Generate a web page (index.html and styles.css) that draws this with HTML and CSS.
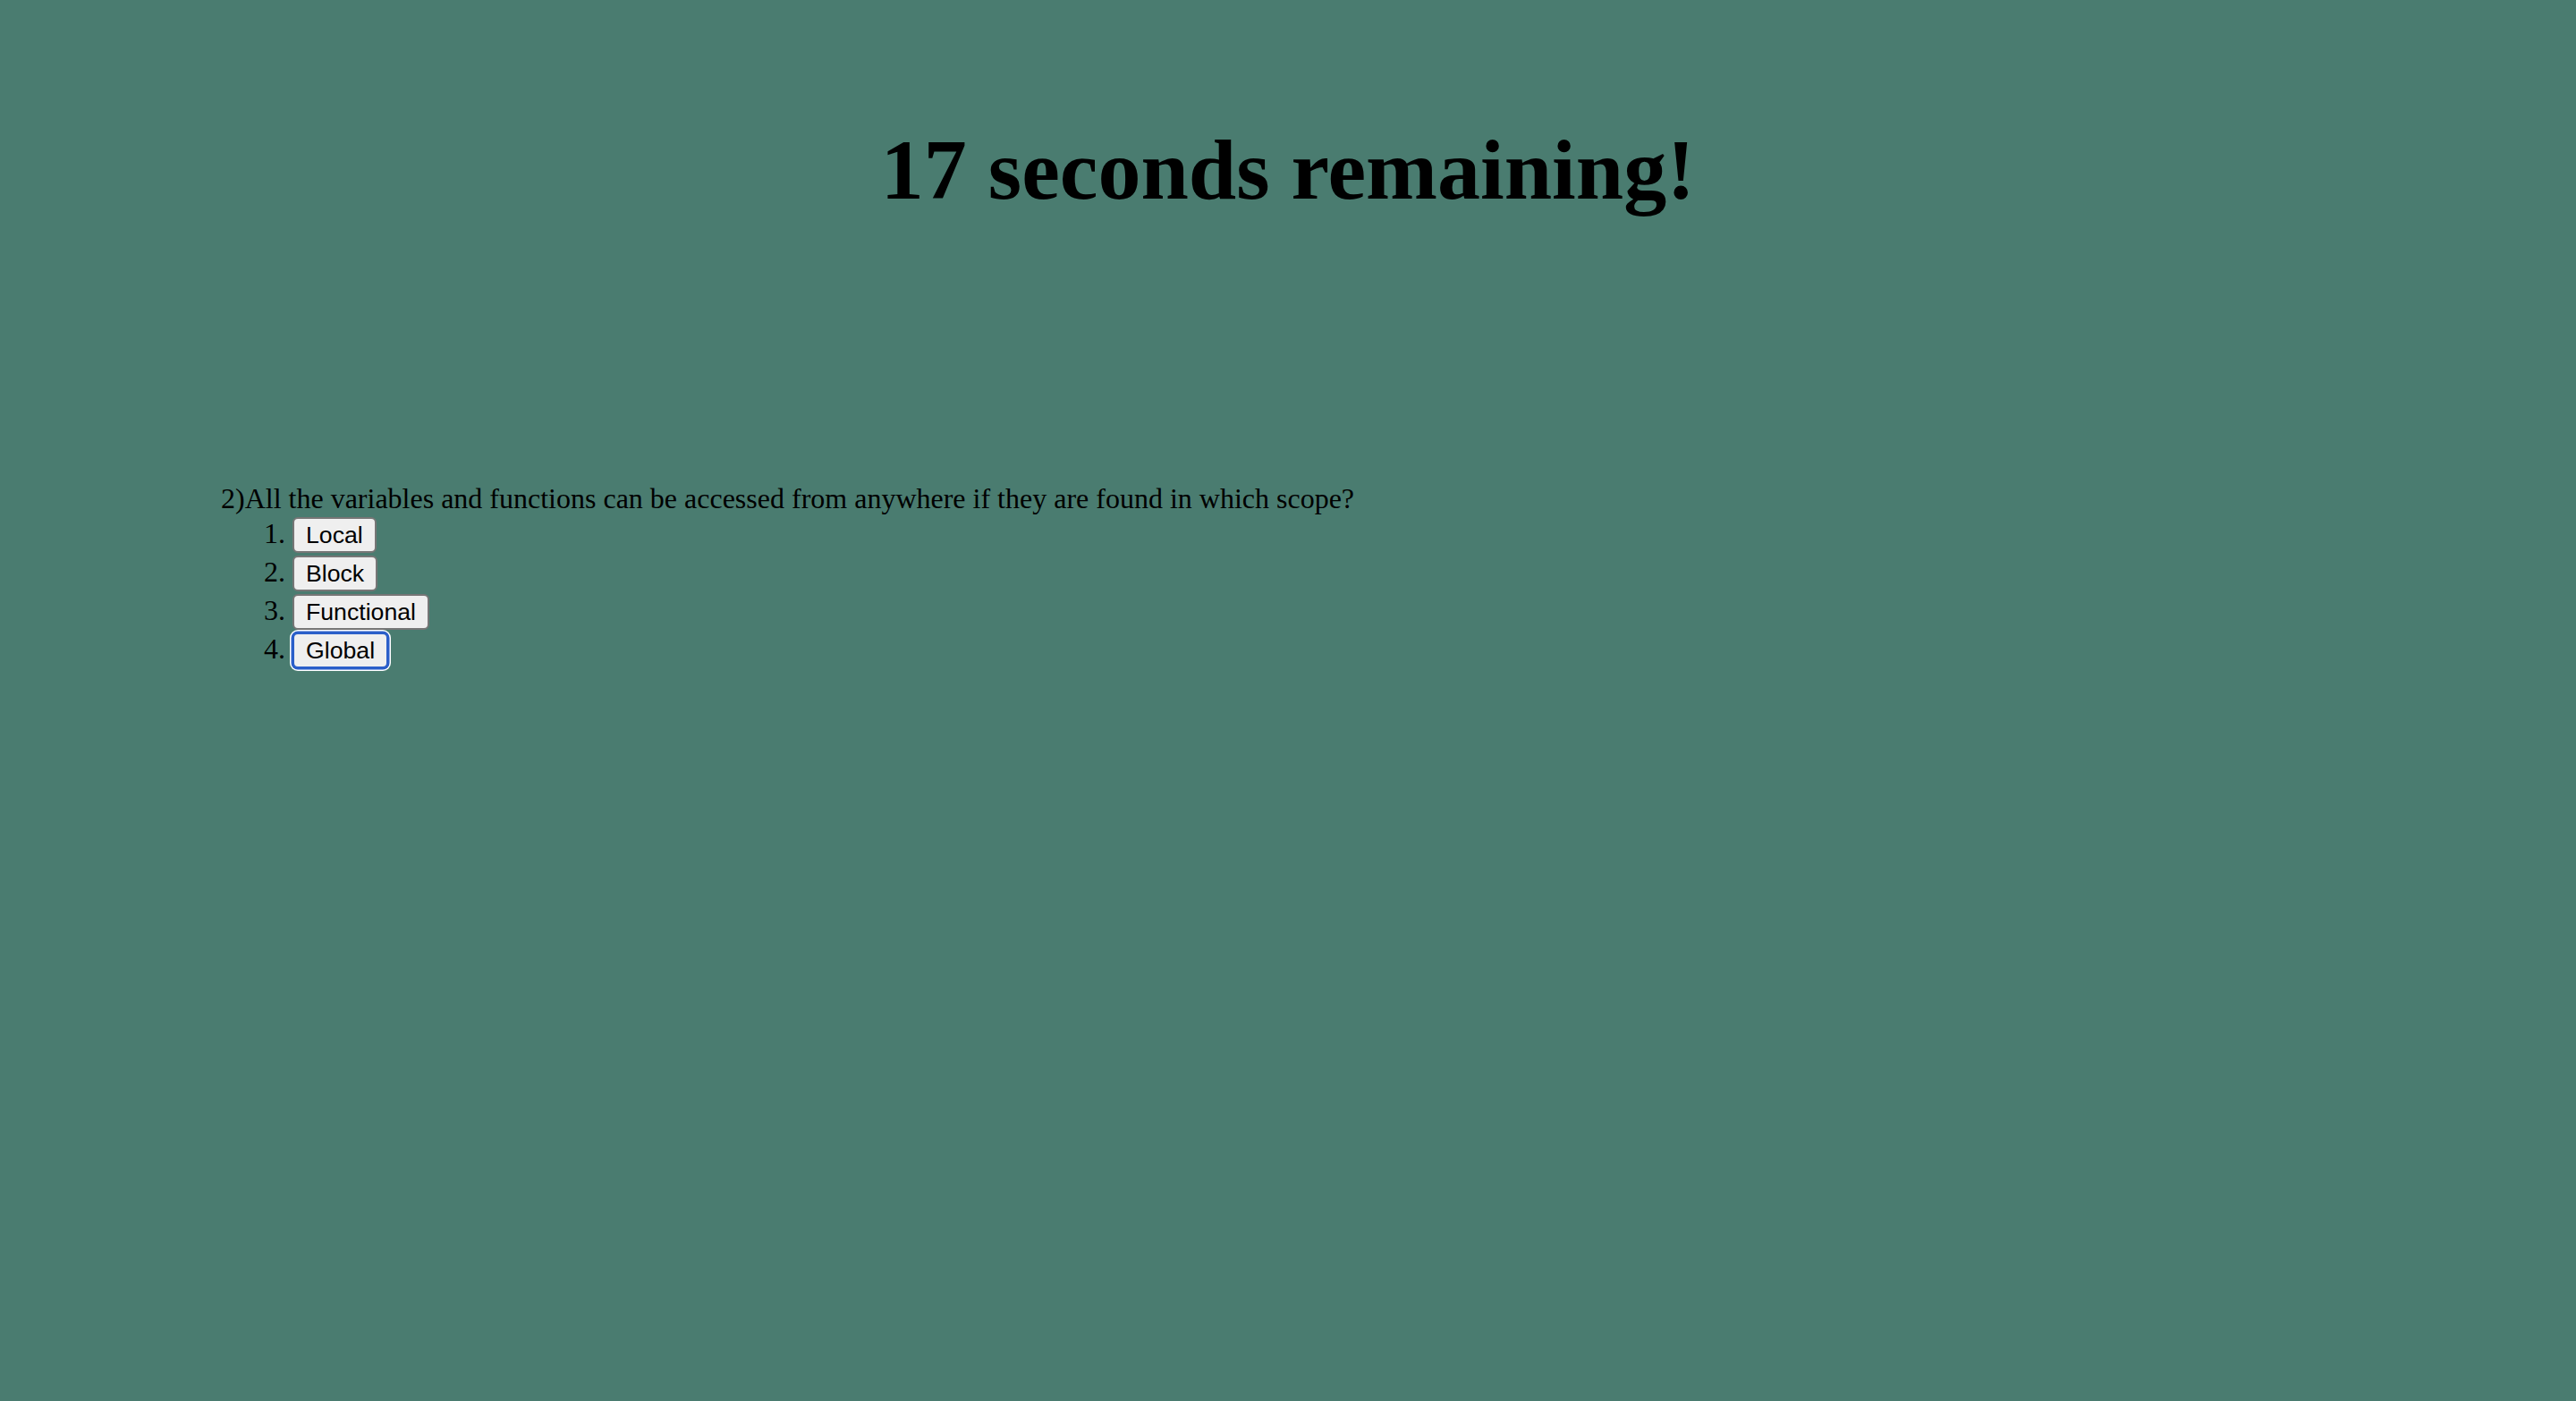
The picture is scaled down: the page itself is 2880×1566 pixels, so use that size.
FILE: index.html
```html
<!DOCTYPE html>
<html>
<head>
<meta charset="utf-8">
<title>Quiz</title>
<link rel="stylesheet" href="styles.css">
</head>
<body>
<header class="timer">
  <h1 class="timer-title">17 seconds remaining!</h1>
</header>
<main class="quiz">
  <div class="question">2)All the variables and functions can be accessed from anywhere if they are found in which scope?</div>
  <ol class="answers">
    <li><button class="answer">Local</button></li>
    <li><button class="answer">Block</button></li>
    <li><button class="answer">Functional</button></li>
    <li><button class="answer answer-focused">Global</button></li>
  </ol>
</main>
</body>
</html>
```
FILE: styles.css
```css
html, body {
  margin: 0;
  padding: 0;
}
body {
  background: rgb(74, 124, 112);
  color: #000;
  font-family: "Liberation Serif", "Times New Roman", serif;
  font-size: 32px;
  min-height: 1566px;
}
.timer {
  padding-top: 134px;
}
.timer-title {
  margin: 0;
  text-align: center;
  font-size: 96px;
  font-weight: bold;
  line-height: normal;
}
.quiz {
  margin-top: 294px;
  padding-left: 247px;
}
.question {
  line-height: normal;
}
.answers {
  margin: 0;
  padding-left: 80px;
}
.answers li {
  line-height: normal;
}
.answer {
  font-family: "Liberation Sans", Arial, sans-serif;
  font-size: 26.67px;
  line-height: 30px;
  color: #000;
  background: #efefef;
  border: 2px solid #767676;
  border-radius: 6px;
  padding: 3px 13px;
  margin: 1.5px 0;
}
.answer-focused {
  border-color: #2b5fc9;
  box-shadow: 0 0 0 1.5px #2b5fc9, 0 0 0 3px #ffffff;
}
```
